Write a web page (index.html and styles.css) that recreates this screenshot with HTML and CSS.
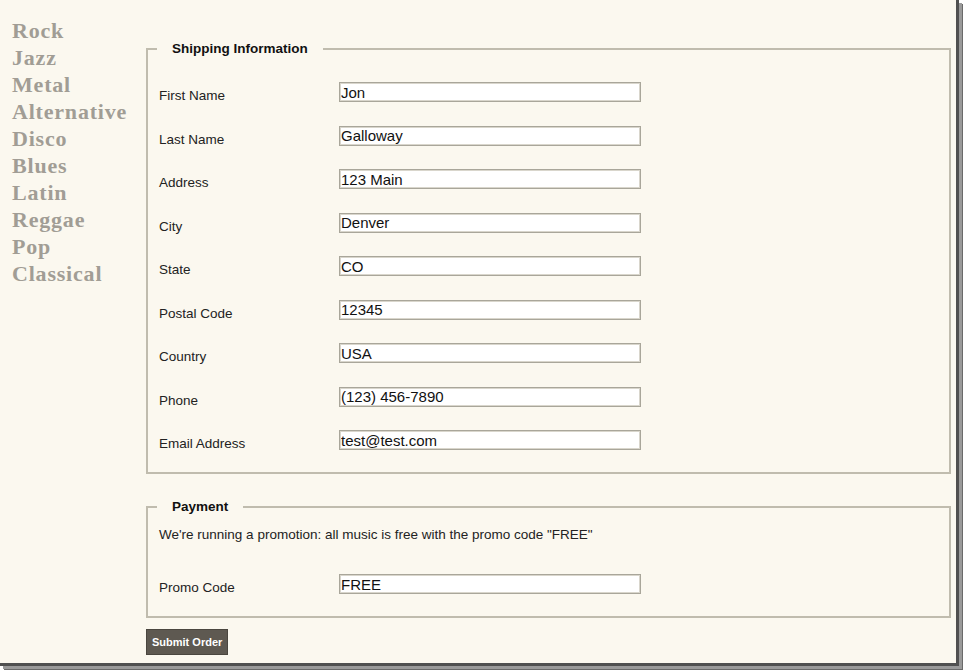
FILE: index.html
```html
<!DOCTYPE html>
<html>
<head>
<meta charset="utf-8">
<link rel="stylesheet" href="styles.css">
</head>
<body>
<div class="frame">
  <div class="page">
    <ul class="genres">
      <li>Rock</li>
      <li>Jazz</li>
      <li>Metal</li>
      <li>Alternative</li>
      <li>Disco</li>
      <li>Blues</li>
      <li>Latin</li>
      <li>Reggae</li>
      <li>Pop</li>
      <li>Classical</li>
    </ul>
    <div class="main">
      <fieldset class="box ship">
        <legend>Shipping Information</legend>
        <div class="row"><label>First Name</label><input class="field" value="Jon"></div>
        <div class="row"><label>Last Name</label><input class="field" value="Galloway"></div>
        <div class="row"><label>Address</label><input class="field" value="123 Main"></div>
        <div class="row"><label>City</label><input class="field" value="Denver"></div>
        <div class="row"><label>State</label><input class="field" value="CO"></div>
        <div class="row"><label>Postal Code</label><input class="field" value="12345"></div>
        <div class="row"><label>Country</label><input class="field" value="USA"></div>
        <div class="row"><label>Phone</label><input class="field" value="(123) 456-7890"></div>
        <div class="row"><label>Email Address</label><input class="field" value="test@test.com"></div>
      </fieldset>
      <fieldset class="box pay">
        <legend>Payment</legend>
        <p class="promo">We're running a promotion: all music is free with the promo code "FREE"</p>
        <div class="row"><label>Promo Code</label><input class="field" value="FREE"></div>
      </fieldset>
      <button class="submit">Submit Order</button>
    </div>
  </div>
</div>
</body>
</html>
```
FILE: styles.css
```css
html, body {
  margin: 0;
  padding: 0;
  background: #ffffff;
}
.frame {
  width: 964px;
  height: 671px;
  background: #ffffff;
}
.page {
  box-sizing: border-box;
  width: 959px;
  height: 666px;
  background: #fbf8ef;
  border-right: 3px solid #505050;
  border-bottom: 3px solid #505050;
  box-shadow: 3px 3px 0 0 #9a9a9a, 4px 4px 0 0 #6a6a6a;
  display: flex;
  font-family: "Liberation Sans", Arial, sans-serif;
  color: #222;
}
.genres {
  list-style: none;
  margin: 0;
  padding: 17px 0 0 12px;
  width: 146px;
  flex: none;
  box-sizing: border-box;
  font-family: "Liberation Serif", "DejaVu Serif", serif;
  font-weight: bold;
  font-size: 22px;
  letter-spacing: 0.8px;
  line-height: 27px;
  color: #a19d95;
}
.main {
  padding-top: 41px;
  width: 805px;
  display: flex;
  flex-direction: column;
  align-items: flex-start;
}
.box {
  width: 805px;
  box-sizing: border-box;
  margin: 0;
  border: 2px solid #c0bcae;
  padding: 0 11px;
}
.box legend {
  font-size: 13.5px;
  font-weight: bold;
  color: #111;
  padding: 0 15px;
  margin-left: -2px;
  line-height: 16px;
}
.ship {
  padding-top: 25px;
  padding-bottom: 10px;
}
.row {
  display: flex;
  align-items: flex-start;
  height: 43.5px;
}
.row:last-child {
  height: 32px;
}
.row label {
  width: 180px;
  font-size: 13.5px;
  margin-top: 6px;
}
.field {
  box-sizing: border-box;
  width: 302px;
  height: 20px;
  margin: 0;
  padding: 0 1px;
  border: 1px solid #a9a69a;
  box-shadow: inset 0 0 0 1px #d9d6cc;
  background: #fff;
  font-family: "Liberation Sans", Arial, sans-serif;
  font-size: 15px;
  color: #111;
  line-height: 16px;
}
.pay {
  margin-top: 25px;
  padding-top: 11px;
  padding-bottom: 0;
}
.promo {
  font-size: 13.5px;
  margin: 0 0 30px 0;
  line-height: 18px;
}
.pay .row:last-child {
  height: 42px;
}
.submit {
  margin-top: 11px;
  background: #5e5951;
  color: #fff;
  border: 1px solid #4a463f;
  font-family: "Liberation Sans", Arial, sans-serif;
  font-weight: bold;
  font-size: 11px;
  height: 26px;
  padding: 0 5px;
}
```
